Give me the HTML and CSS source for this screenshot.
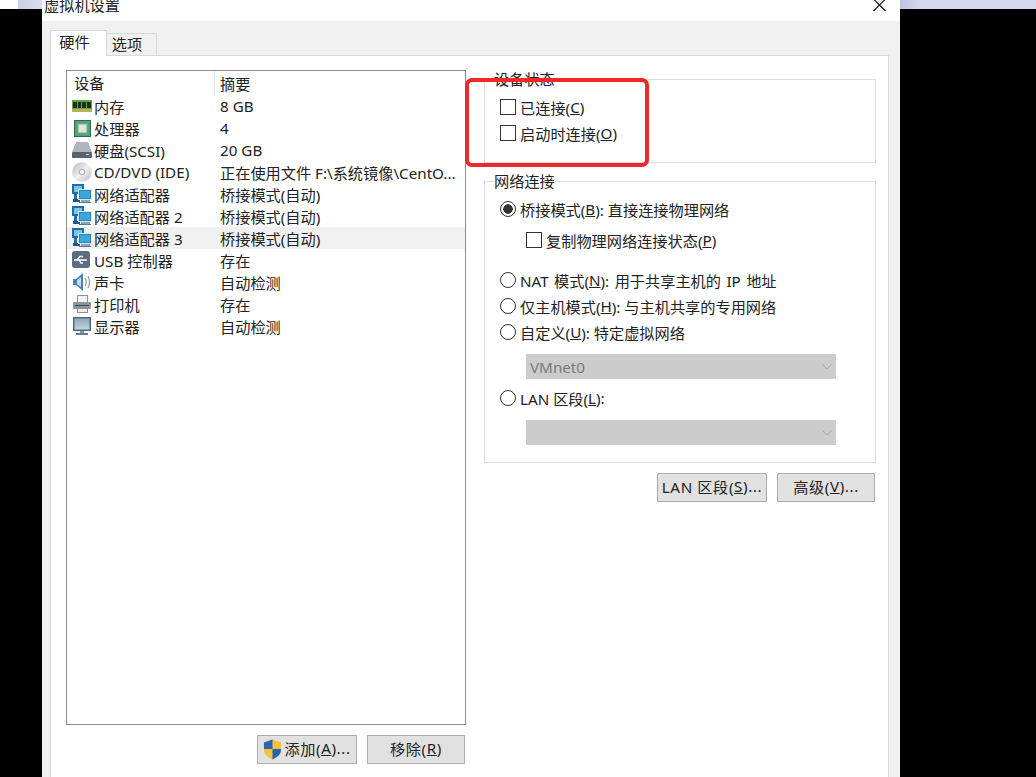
FILE: index.html
```html
<!DOCTYPE html>
<html lang="zh-CN">
<head>
    <meta charset="UTF-8">
    <title>虚拟机设置</title>
    <link rel="stylesheet" href="styles.css">
</head>
<body>
<svg class="defs" width="0" height="0">
    <defs>
        <linearGradient id="disc" x1="0" y1="0" x2="1" y2="1">
            <stop offset="0" stop-color="#aeb6bc"/>
            <stop offset="0.5" stop-color="#eef0f2"/>
            <stop offset="1" stop-color="#b9c0c6"/>
        </linearGradient>
        <linearGradient id="screen" x1="0" y1="0" x2="0" y2="1">
            <stop offset="0" stop-color="#8fa9b8"/>
            <stop offset="1" stop-color="#c3d4dc"/>
        </linearGradient>
    </defs>
    <symbol id="net" viewBox="0 0 20 20">
        <rect x="0" y="0" width="12" height="10" fill="#1f6ea8"/>
        <rect x="2" y="2" width="8" height="6" fill="#7cc4e8"/>
        <rect x="2" y="10" width="3" height="7" fill="#1f6ea8"/>
        <rect x="1" y="15" width="7" height="3" fill="#14588c"/>
        <rect x="6" y="5" width="14" height="11" fill="#2a86c2"/>
        <rect x="6.500" y="5.500" width="13" height="10" fill="none" stroke="#d6e8f2"/>
        <rect x="8" y="7" width="10" height="7" fill="#3fa6d8"/>
        <rect x="9" y="16" width="9" height="2" fill="#8fa4b2"/>
        <rect x="7" y="18" width="12" height="1" fill="#5d7a8e"/>
    </symbol>
</svg>

<!-- 后面的桌面 -->
<div class="desk-left"></div>
<div class="desk-strip"></div>
<div class="desk-right"></div>

<div class="window">
    <div class="title-bar">
        <span class="title">虚拟机设置</span>
        <svg class="close" width="13" height="12" viewBox="0 0 13 12"><path d="M0.5 -1 L12.5 11 M12.5 -1 L0.5 11" stroke="#111" stroke-width="1.1" fill="none"/></svg>
    </div>

    <div class="tabs">
        <div class="tab active">硬件</div>
        <div class="tab">选项</div>
    </div>

    <div class="panel">
        <!-- 设备列表 -->
        <div class="left-col">
            <div class="device-list">
                <div class="list-head">
                    <div class="col-name">设备</div>
                    <div class="col-sum">摘要</div>
                </div>
                <div class="row">
                    <div class="col-name">
                        <svg class="icon" viewBox="0 0 20 20"><rect x="0" y="4" width="20" height="12" fill="#5da548"/><rect x="1" y="6" width="4" height="6" fill="#1f2f1a"/><rect x="6" y="6" width="3" height="6" fill="#1f2f1a"/><rect x="10" y="6" width="4" height="6" fill="#1f2f1a"/><rect x="15" y="6" width="4" height="6" fill="#1f2f1a"/><rect x="0" y="13" width="20" height="3" fill="#b8b25a"/></svg>
                        <span>内存</span>
                    </div>
                    <div class="col-sum">8 GB</div>
                </div>
                <div class="row">
                    <div class="col-name">
                        <svg class="icon" viewBox="0 0 20 20"><rect x="2.500" y="2.500" width="16" height="16" fill="#4aa57a" stroke="#2c6e4c"/><rect x="6" y="6" width="9" height="9" fill="#dfe5da" stroke="#8aa58c"/></svg>
                        <span>处理器</span>
                    </div>
                    <div class="col-sum">4</div>
                </div>
                <div class="row">
                    <div class="col-name">
                        <svg class="icon" viewBox="0 0 20 20"><path d="M4 2 H16 L20 12 H0 Z" fill="#aeb5bc"/><rect x="0" y="12" width="20" height="6" rx="1" fill="#59636d"/><rect x="14" y="14" width="3" height="1" fill="#d8dde0"/></svg>
                        <span>硬盘(SCSI)</span>
                    </div>
                    <div class="col-sum">20 GB</div>
                </div>
                <div class="row">
                    <div class="col-name">
                        <svg class="icon" viewBox="0 0 20 20"><circle cx="10" cy="10" r="9.800" fill="url(#disc)"/><circle cx="10" cy="10" r="2.800" fill="#fff" stroke="#a4acb2"/></svg>
                        <span>CD/DVD (IDE)</span>
                    </div>
                    <div class="col-sum">正在使用文件 F:\系统镜像\CentO...</div>
                </div>
                <div class="row">
                    <div class="col-name"><svg class="icon"><use href="#net"/></svg><span>网络适配器</span></div>
                    <div class="col-sum">桥接模式(自动)</div>
                </div>
                <div class="row">
                    <div class="col-name"><svg class="icon"><use href="#net"/></svg><span>网络适配器 2</span></div>
                    <div class="col-sum">桥接模式(自动)</div>
                </div>
                <div class="row selected">
                    <div class="col-name"><svg class="icon"><use href="#net"/></svg><span>网络适配器 3</span></div>
                    <div class="col-sum">桥接模式(自动)</div>
                </div>
                <div class="row">
                    <div class="col-name">
                        <svg class="icon" viewBox="0 0 20 20"><rect x="0" y="1" width="18" height="17" rx="3" fill="#5b6e80"/><path d="M2 10 H15 M5 10 L8 6.500 H11 M7 10 L9 13 H11" stroke="#fff" stroke-width="1.300" fill="none"/></svg>
                        <span>USB 控制器</span>
                    </div>
                    <div class="col-sum">存在</div>
                </div>
                <div class="row">
                    <div class="col-name">
                        <svg class="icon" viewBox="0 0 20 20"><path d="M1 7 H4 L11 1 V19 L4 13 H1 Z" fill="#4680bd"/><path d="M5 8 L9 5 V15 L5 12 Z" fill="#c6dcf0"/><path d="M13 6 Q15.500 10 13 14 M16 4 Q19 10 16 16" stroke="#8f9aa5" stroke-width="1.200" fill="none"/></svg>
                        <span>声卡</span>
                    </div>
                    <div class="col-sum">自动检测</div>
                </div>
                <div class="row">
                    <div class="col-name">
                        <svg class="icon" viewBox="0 0 20 20"><rect x="5.500" y="1.500" width="10" height="7" fill="#f2f2f2" stroke="#8a9096"/><rect x="1" y="8" width="18" height="7" rx="1" fill="#8d959c"/><rect x="3" y="11" width="14" height="1" fill="#44494e"/><rect x="5.500" y="14.500" width="10" height="4" fill="#eee" stroke="#8a9096"/></svg>
                        <span>打印机</span>
                    </div>
                    <div class="col-sum">存在</div>
                </div>
                <div class="row">
                    <div class="col-name">
                        <svg class="icon" viewBox="0 0 20 20"><rect x="1" y="1" width="18" height="14" fill="#4f6a7e"/><rect x="2.500" y="2.500" width="15" height="11" fill="url(#screen)"/><rect x="8" y="15" width="4" height="2" fill="#8a98a2"/><rect x="4" y="17" width="12" height="2" fill="#6a7a86"/></svg>
                        <span>显示器</span>
                    </div>
                    <div class="col-sum">自动检测</div>
                </div>
            </div>
            <div class="btn-row">
                <button class="btn btn-add" type="button">
                    <svg class="shield" width="19" height="21" viewBox="0 0 20 21">
                        <path d="M10 0 L19 3 V11 Q19 17 10 21 Q1 17 1 11 V3 Z" fill="#f3c23c"/>
                        <path d="M10 0 V10 H1 V3 Z" fill="#2a62b0"/>
                        <path d="M10 10 H19 V11 Q19 17 10 21 Z" fill="#2a62b0"/>
                    </svg>添加(<u>A</u>)...</button>
                <button class="btn btn-remove" type="button">移除(<u>R</u>)</button>
            </div>
        </div>

        <!-- 设备状态 / 网络连接 -->
        <div class="right-col">
            <fieldset class="group status">
                <legend>设备状态</legend>
                <label class="opt"><span class="check"></span>已连接(<u>C</u>)</label>
                <label class="opt"><span class="check"></span>启动时连接(<u>O</u>)</label>
            </fieldset>

            <fieldset class="group network">
                <legend>网络连接</legend>
                <label class="opt"><span class="radio on"></span>桥接模式(<u>B</u>): 直接连接物理网络</label>
                <label class="opt sub"><span class="check"></span>复制物理网络连接状态(<u>P</u>)</label>
                <label class="opt nat"><span class="radio"></span>NAT 模式(<u>N</u>): 用于共享主机的 IP 地址</label>
                <label class="opt"><span class="radio"></span>仅主机模式(<u>H</u>): 与主机共享的专用网络</label>
                <label class="opt"><span class="radio"></span>自定义(<u>U</u>): 特定虚拟网络</label>
                <div class="select">VMnet0<svg class="arrow" width="10" height="6" viewBox="0 0 10 6"><path d="M0.500 0.500 L5 5 L9.500 0.500" stroke="#aaa" fill="none"/></svg></div>
                <label class="opt lan"><span class="radio"></span>LAN 区段(<u>L</u>):</label>
                <div class="select"><svg class="arrow" width="10" height="6" viewBox="0 0 10 6"><path d="M0.500 0.500 L5 5 L9.500 0.500" stroke="#aaa" fill="none"/></svg></div>
            </fieldset>

            <div class="btn-row">
                <button class="btn btn-lan" type="button">LAN 区段(<u>S</u>)...</button>
                <button class="btn btn-adv" type="button">高级(<u>V</u>)...</button>
            </div>
        </div>
    </div>
</div>

<!-- 红色标注框 -->
<div class="mark"></div>
</body>
</html>
```

FILE: styles.css
```css
* {
    box-sizing: border-box;
    margin: 0;
    padding: 0;
}

html, body {
    width: 1036px;
    height: 777px;
    overflow: hidden;
}

body {
    position: relative;
    background-color: #000;
    font-family: "Noto Sans", "Noto Sans CJK SC", sans-serif;
    font-size: 15.2px;
    color: #222;
    padding-left: 42px;
}

.defs {
    position: absolute;
}

.desk-left {
    position: absolute;
    left: 0;
    top: 0;
    width: 18px;
    height: 9px;
    background-color: #fff;
}

.desk-strip {
    position: absolute;
    left: 18px;
    top: 0;
    width: 24px;
    height: 9px;
    background: linear-gradient(90deg, #c8cfe6, #d9ddf0);
}

.desk-right {
    position: absolute;
    left: 900px;
    top: 0;
    width: 136px;
    height: 9px;
    background: linear-gradient(90deg, #bfc3dc, #d6daf0 20px);
}

.window {
    position: relative;
    width: 858px;
    height: 777px;
    background-color: #f0f0f0;
    display: flex;
    flex-direction: column;
}

.title-bar {
    height: 21px;
    background-color: #fff;
    display: flex;
    justify-content: space-between;
    padding: 0 14px 0 2px;
    overflow: hidden;
}

.title {
    line-height: 11px;
    white-space: nowrap;
}

.close {
    display: block;
}

.tabs {
    display: flex;
    align-items: flex-end;
    height: 34px;
    padding-left: 8px;
    position: relative;
    z-index: 1;
}

.tab {
    width: 50px;
    height: 22px;
    line-height: 21px;
    padding-right: 9px;
    text-align: center;
    border: 1px solid #d9d9d9;
    border-bottom: none;
    border-left: none;
}

.tab.active {
    width: 57px;
    height: 26px;
    line-height: 23px;
    padding-right: 8px;
    background-color: #fff;
    border-left: 1px solid #d9d9d9;
    margin-bottom: -1px;
}

.panel {
    flex: 1;
    margin: 0 11px 0 8px;
    padding: 14px 0 0 16px;
    background-color: #fff;
    border: 1px solid #d9d9d9;
    border-width: 1px 1px 0 1px;
    display: flex;
    gap: 18px;
}

.left-col {
    width: 400px;
    margin-left: -1px;
}

.device-list {
    height: 655px;
    border: 1px solid #8c8c8c;
}

.list-head {
    display: flex;
    height: 24px;
    align-items: center;
}

.list-head .col-name {
    padding-left: 7px;
    height: 100%;
    line-height: 25px;
    border-right: 1px solid #e2e2e2;
}

.row {
    display: flex;
    height: 22px;
    align-items: center;
    white-space: nowrap;
}

.row.selected {
    background-color: #f0f0f0;
}

.col-name {
    width: 148px;
    display: flex;
    align-items: center;
    padding-left: 5px;
}

.col-sum {
    padding-left: 5px;
}

.icon {
    width: 20px;
    height: 20px;
    margin-right: 2px;
    flex-shrink: 0;
}

.btn-row {
    display: flex;
    justify-content: flex-end;
    gap: 10px;
    margin-top: 10px;
    padding-right: 1px;
}

.btn {
    height: 29px;
    padding-bottom: 4px;
    background-color: #e1e1e1;
    border: 1px solid #adadad;
    font-family: inherit;
    font-size: 15.2px;
    letter-spacing: 0.6px;
    color: #222;
    display: flex;
    align-items: center;
    justify-content: center;
    white-space: nowrap;
}

.btn-add {
    width: 100px;
}

.btn-remove {
    width: 98px;
}

.btn-lan {
    width: 110px;
}

.btn-adv {
    width: 98px;
}

.shield {
    margin: 4px 2px 0 0;
}

.right-col {
    width: 392px;
    margin-top: -1px;
}

.group {
    border: 1px solid #dcdcdc;
    min-width: 0;
}

.group legend {
    margin-left: -6px;
    line-height: 20px;
    padding: 0;
}

.status {
    height: 94px;
    padding: 5px 0 0 15px;
}

.network {
    height: 292px;
    margin-top: 8px;
    padding: 5px 0 0 15px;
}

.opt {
    display: flex;
    align-items: center;
    height: 26px;
    white-space: nowrap;
}

.opt.sub {
    margin: 5px 0 0 26px;
}

.opt.nat {
    margin-top: 14px;
    word-spacing: 1.5px;
}

.opt.lan {
    margin-top: 6px;
}

.check {
    width: 16px;
    height: 16px;
    border: 1px solid #333;
    background-color: #fff;
    margin-right: 4px;
}

.radio {
    width: 16px;
    height: 16px;
    border: 1px solid #333;
    border-radius: 50%;
    margin-right: 4px;
    background-color: #fff;
}

.radio.on {
    background: radial-gradient(circle, #333 0, #333 4.500px, #fff 5px);
}

.select {
    display: flex;
    align-items: center;
    width: 310px;
    height: 25px;
    margin: 9px 0 0 26px;
    padding: 0 4px;
    background-color: #ccc;
    color: #7a7a7a;
}

.arrow {
    margin-left: auto;
}

.mark {
    position: absolute;
    left: 465px;
    top: 78px;
    width: 184px;
    height: 89px;
    border: 4px solid #ec2a27;
    border-radius: 7px;
}
```
